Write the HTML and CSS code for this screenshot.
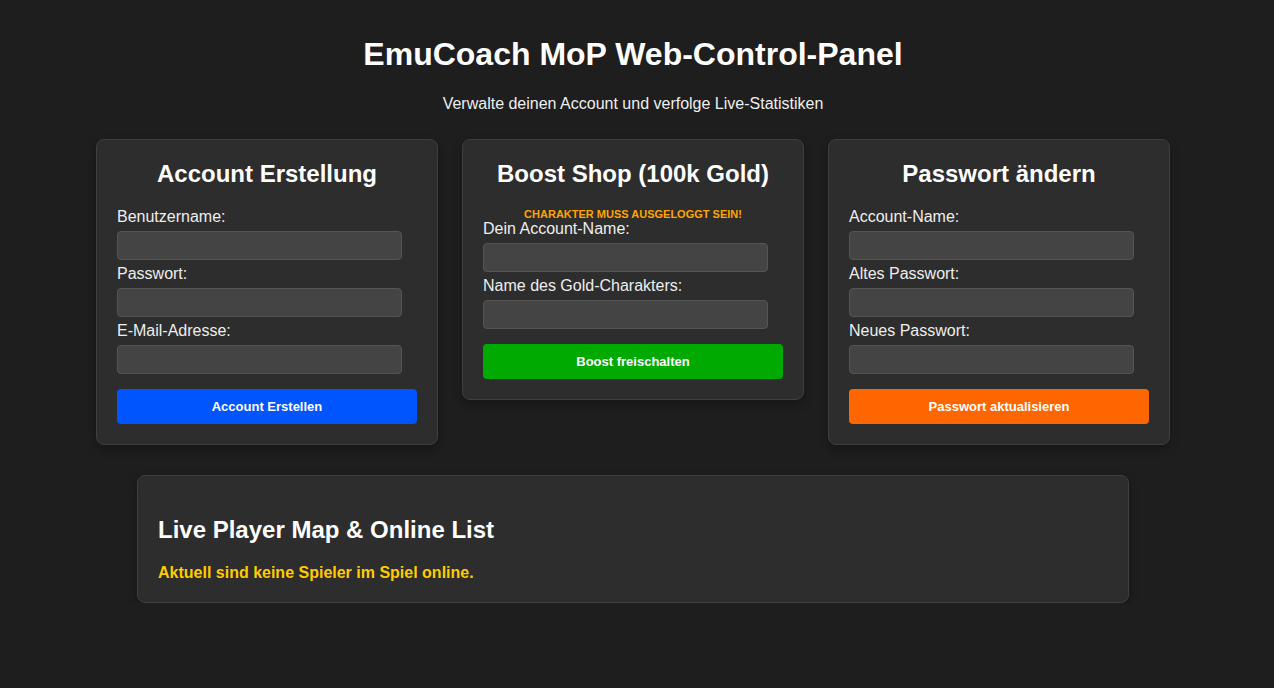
FILE: index.html
```html
<!DOCTYPE html>
<html lang="de">
<head>
    <meta charset="UTF-8">
    <meta name="viewport" content="width=device-width, initial-scale=1.0">
    <title>EmuCoach MoP Web-Control-Panel</title>
    <link rel="stylesheet" href="styles.css">
</head>
<body>
    <header class="header">
        <h1>EmuCoach MoP Web-Control-Panel</h1>
        <p>Verwalte deinen Account und verfolge Live-Statistiken</p>
    </header>

    <div class="cards">
        <!-- Account anlegen -->
        <div class="card">
            <h2>Account Erstellung</h2>
            <form>
                <label for="reg-user">Benutzername:</label>
                <input type="text" id="reg-user" name="username">
                <label for="reg-pass">Passwort:</label>
                <input type="password" id="reg-pass" name="password">
                <label for="reg-mail">E-Mail-Adresse:</label>
                <input type="email" id="reg-mail" name="email">
                <button type="button" class="btn btn-blue">Account Erstellen</button>
            </form>
        </div>

        <!-- Boost Shop -->
        <div class="card">
            <h2>Boost Shop (100k Gold)</h2>
            <p class="warning">Charakter muss ausgeloggt sein!</p>
            <form>
                <label for="boost-acc">Dein Account-Name:</label>
                <input type="text" id="boost-acc" name="account">
                <label for="boost-char">Name des Gold-Charakters:</label>
                <input type="text" id="boost-char" name="character">
                <button type="button" class="btn btn-green">Boost freischalten</button>
            </form>
        </div>

        <!-- Passwort ändern -->
        <div class="card">
            <h2>Passwort ändern</h2>
            <form>
                <label for="pw-acc">Account-Name:</label>
                <input type="text" id="pw-acc" name="account">
                <label for="pw-old">Altes Passwort:</label>
                <input type="password" id="pw-old" name="old_password">
                <label for="pw-new">Neues Passwort:</label>
                <input type="password" id="pw-new" name="new_password">
                <button type="button" class="btn btn-orange">Passwort aktualisieren</button>
            </form>
        </div>
    </div>

    <div class="card card-wide">
        <h2>Live Player Map &amp; Online List</h2>
        <p class="no-players">Aktuell sind keine Spieler im Spiel online.</p>
    </div>
</body>
</html>
```

FILE: styles.css
```css
body {
    font-family: "Liberation Sans", Arial, sans-serif;
    background-color: #1e1e1e;
    color: #fff;
    margin: 0 8px 40px 0;
}
.header {
    text-align: center;
    padding-top: 36px;
}
.header h1 {
    font-size: 32px;
    margin: 0 0 22px;
}
.header p {
    font-size: 16px;
    color: #eee;
    margin: 0;
}
.cards {
    display: flex;
    justify-content: center;
    align-items: flex-start;
    gap: 24px;
    margin-top: 26px;
}
.card {
    width: 342px;
    box-sizing: border-box;
    background-color: #2d2d2d;
    border: 1px solid #3f3f3f;
    border-radius: 8px;
    padding: 20px;
    box-shadow: 0 4px 10px rgba(0, 0, 0, 0.3);
}
.card h2 {
    font-size: 24px;
    text-align: center;
    margin: 0 0 20px;
}
.warning {
    color: #ffa500;
    font-size: 11px;
    font-weight: bold;
    text-transform: uppercase;
    text-align: center;
    margin: 0;
}
label {
    display: block;
    font-size: 16px;
    color: #eee;
}
input {
    display: block;
    width: 95%;
    height: 29px;
    box-sizing: border-box;
    margin: 5px 0;
    padding: 6px 8px;
    background-color: #444;
    border: 1px solid #555;
    border-radius: 4px;
    color: #fff;
}
.btn {
    display: block;
    width: 100%;
    height: 35px;
    margin-top: 15px;
    border: none;
    border-radius: 4px;
    color: #fff;
    font-family: inherit;
    font-size: 13px;
    font-weight: bold;
    cursor: pointer;
}
.btn-blue {
    background-color: #0055ff;
}
.btn-green {
    background-color: #00aa00;
}
.btn-orange {
    background-color: #ff6600;
}
.card-wide {
    width: auto;
    max-width: 992px;
    margin: 30px auto 0;
    text-align: left;
}
.card-wide h2 {
    text-align: left;
    margin: 20px 0 20px;
}
.no-players {
    color: #ffcc00;
    font-weight: bold;
    margin: 0;
}
```
